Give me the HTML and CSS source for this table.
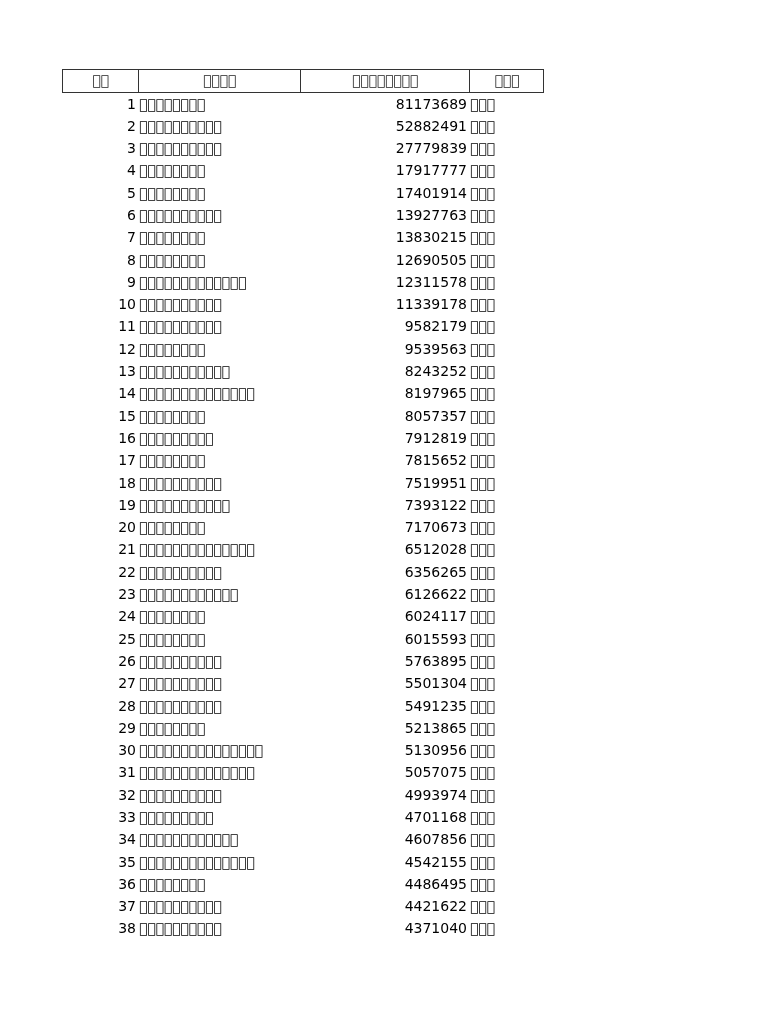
FILE: index.html
```html
<!DOCTYPE html>
<html><head><meta charset="utf-8"><link rel="stylesheet" href="styles.css"></head>
<body>
<div class="sheet">
  <div class="head">
    <div class="hc">&#xE000;&#xE000;</div>
    <div class="hc">&#xE000;&#xE000;&#xE000;&#xE000;</div>
    <div class="hc">&#xE000;&#xE000;&#xE000;&#xE000;&#xE000;&#xE000;&#xE000;&#xE000;</div>
    <div class="hc">&#xE000;&#xE000;&#xE000;</div>
  </div>
  <div class="body" id="rows"></div>
</div>
<script src="app.js"></script>
</body></html>
```
FILE: styles.css
```css
html, body { margin: 0; padding: 0; background: #fff; }
body { font-family: "DejaVu Sans", sans-serif; font-size: 14px; color: #000; }
.sheet { padding: 69px 0 0 62px; will-change: transform; }
.head {
  display: grid;
  grid-template-columns: 75px 162px 169px 75px;
  width: 482px;
  box-sizing: border-box;
  border: 1px solid #333;
  height: 24px;
}
.hc {
  text-align: center;
  line-height: 20px;
  border-left: 1px solid #333;
  color: #222;
  letter-spacing: -0.15px;
}
.hc:first-child { border-left: none; }
.body {
  display: grid;
  grid-template-columns: 76px 162px 169px 75px;
  grid-auto-rows: 22.3px;
  width: 482px;
  line-height: 22.3px;
  margin-top: -0.5px;
}
.c { white-space: nowrap; overflow: hidden; }
.num { text-align: right; padding-right: 2px; }
.name { padding-left: 1px; letter-spacing: -0.15px; }
.val { text-align: right; padding-right: 2px; }
.unit { padding-left: 1px; letter-spacing: -0.15px; }
```
FILE: app.js
```js
var data = [
  [8,81173689],[10,52882491],[10,27779839],[8,17917777],[8,17401914],
  [10,13927763],[8,13830215],[8,12690505],[13,12311578],[10,11339178],
  [10,9582179],[8,9539563],[11,8243252],[14,8197965],[8,8057357],
  [9,7912819],[8,7815652],[10,7519951],[11,7393122],[8,7170673],
  [14,6512028],[10,6356265],[12,6126622],[8,6024117],[8,6015593],
  [10,5763895],[10,5501304],[10,5491235],[8,5213865],[15,5130956],
  [14,5057075],[10,4993974],[9,4701168],[12,4607856],[14,4542155],
  [8,4486495],[10,4421622],[10,4371040]
];
var box = "\uE000";
function rep(n) { var s = ""; for (var i = 0; i < n; i++) s += box; return s; }
var rows = document.getElementById("rows");
data.forEach(function (d, i) {
  var cells = [
    ["c num", String(i + 1)],
    ["c name", rep(d[0])],
    ["c val", String(d[1])],
    ["c unit", rep(3)]
  ];
  cells.forEach(function (c) {
    var el = document.createElement("div");
    el.className = c[0];
    el.textContent = c[1];
    rows.appendChild(el);
  });
});
```
